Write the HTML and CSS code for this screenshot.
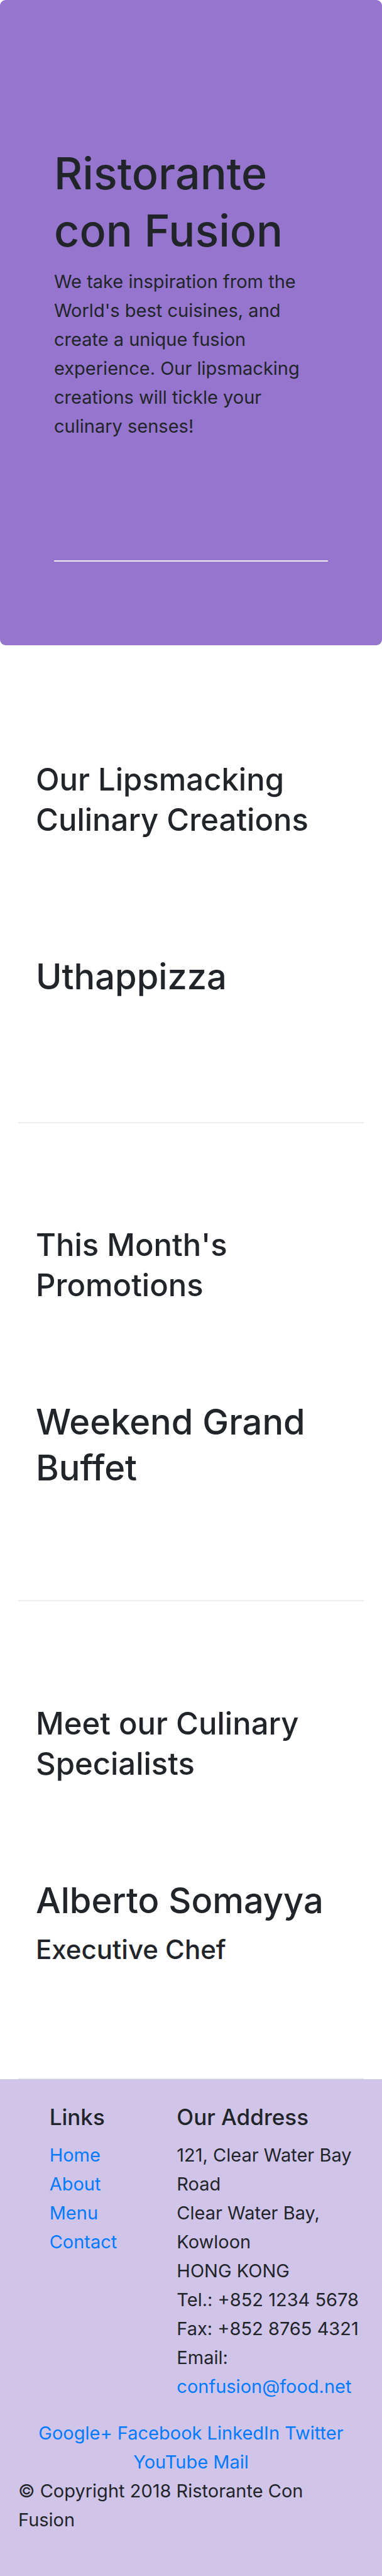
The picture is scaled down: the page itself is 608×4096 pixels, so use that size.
FILE: index.html
```html
<!DOCTYPE html>
<html lang="en">
<head>
  <meta charset="utf-8">
  <meta name="viewport" content="width=device-width, initial-scale=1">
  <title>Ristorante Con Fusion</title>
  <link rel="stylesheet" href="styles.css">
</head>
<body>
  <header class="hero">
    <h1 class="hero-title">Ristorante con Fusion</h1>
    <p class="hero-text">We take inspiration from the World's best cuisines, and create a unique fusion experience. Our lipsmacking creations will tickle your culinary senses!</p>
    <hr class="hero-rule">
  </header>

  <main class="container">
    <section class="feature feature-first">
      <h2 class="feature-label">Our Lipsmacking Culinary Creations</h2>
      <h3 class="feature-name">Uthappizza</h3>
    </section>
    <section class="feature">
      <h2 class="feature-label">This Month's Promotions</h2>
      <h3 class="feature-name">Weekend Grand Buffet</h3>
    </section>
    <section class="feature feature-last">
      <h2 class="feature-label">Meet our Culinary Specialists</h2>
      <h3 class="feature-name">Alberto Somayya</h3>
      <h4 class="feature-role">Executive Chef</h4>
    </section>
  </main>

  <footer class="footer">
    <div class="footer-columns">
      <nav class="footer-links" aria-labelledby="links-title">
        <h5 class="footer-title" id="links-title">Links</h5>
        <ul class="link-list">
          <li><a href="#home">Home</a></li>
          <li><a href="#about">About</a></li>
          <li><a href="#menu">Menu</a></li>
          <li><a href="#contact">Contact</a></li>
        </ul>
      </nav>
      <div class="footer-address">
        <h5 class="footer-title">Our Address</h5>
        <address class="address">
          121, Clear Water Bay Road<br>
          Clear Water Bay, Kowloon<br>
          HONG KONG<br>
          Tel.: +852 1234 5678<br>
          Fax: +852 8765 4321<br>
          Email: <a href="mailto:confusion@food.net">confusion@food.net</a>
        </address>
      </div>
    </div>
    <div class="social">
      <a href="#google">Google+</a>
      <a href="#facebook">Facebook</a>
      <a href="#linkedin">LinkedIn</a>
      <a href="#twitter">Twitter</a>
      <a href="#youtube">YouTube</a>
      <a href="#mail">Mail</a>
    </div>
    <p class="copyright">© Copyright 2018 Ristorante Con Fusion</p>
  </footer>
</body>
</html>
```

FILE: styles.css
```css
* {
  box-sizing: border-box;
}

body {
  margin: 0;
  background: #fff;
  color: #212529;
  font-family: Inter, "Liberation Sans", sans-serif;
  font-size: 29px;
  line-height: 46px;
}

h1, h2, h3, h4, h5, p, ul {
  margin: 0;
}

h1, h2, h3, h4, h5 {
  font-weight: 550;
  font-variant-ligatures: none;
}

a {
  color: #007bff;
  text-decoration: none;
}

/* Hero */
.hero {
  padding: 230px 86px 133px;
  border-radius: 9px;
  background: #9575cd;
}

.hero-title {
  margin-bottom: 13px;
  font-size: 70px;
  line-height: 91px;
}

.hero-rule {
  height: 2px;
  margin: 190px 0 0;
  border: 0;
  background: #eee;
}

/* Features */
.container {
  padding: 0 29px;
}

.feature {
  padding: 162px 28px 173px;
  border-bottom: 2px solid #eee;
}

.feature-first {
  padding-top: 182px;
  padding-bottom: 194px;
}

.feature-last {
  padding-top: 163px;
  padding-bottom: 177px;
}

.feature-label {
  margin-bottom: 149px;
  font-size: 49px;
  line-height: 64px;
}

.feature-first .feature-label {
  margin-bottom: 181px;
}

.feature-name {
  font-size: 56px;
  line-height: 73px;
}

.feature-role {
  margin-top: 13px;
  font-size: 42px;
  line-height: 55px;
}

/* Footer */
.footer {
  padding: 37px 29px 66px;
  background: #d1c4e9;
}

.footer-columns {
  display: grid;
  grid-template-columns: 1fr 4fr 7fr;
  margin: 0 -29px 28px;
}

.footer-links {
  grid-column: 2;
  padding: 0 28px;
}

.footer-address {
  padding-left: 28px;
}

.footer-title {
  margin-bottom: 15px;
  font-size: 35px;
  line-height: 46px;
}

.link-list {
  padding: 0;
  list-style: none;
}

.address {
  padding-right: 28px;
  font-style: normal;
}

.social {
  text-align: center;
}
```
